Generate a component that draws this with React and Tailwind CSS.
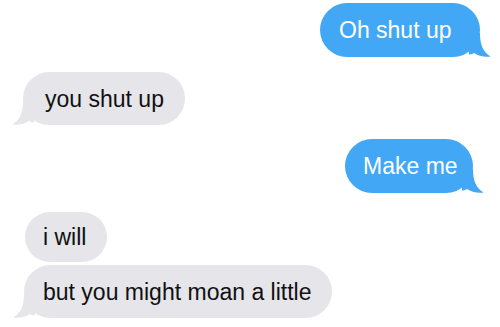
import React from 'react';

const BLUE = '#42a7f4';
const GRAY = '#e5e5ea';

// iOS style tail, drawn for the right side; mirrored for incoming bubbles
const Tail = ({ side, color }) => (
    <svg
        width="22"
        height="24"
        viewBox="0 0 22 24"
        className={side === 'right' ? 'absolute bottom-0 right-[-11px]' : 'absolute bottom-0 left-[-11px] -scale-x-100'}
    >
        <path d="M0 0 H11 C11 11 13.5 18.5 21.5 23.6 C15 24.4 9 22.8 5 20 C3 21.2 1 21.6 0 21.6 Z" fill={color} />
    </svg>
);

const Bubble = ({ side, text, className, tail = true }) => {
    const isMe = side === 'right';
    return (
        <div className={`relative flex items-center rounded-[27px] text-[23px] leading-[22px] ${isMe ? 'bg-[#42a7f4] text-white' : 'bg-[#e5e5ea] text-[#111]'} ${className}`}>
            <span className="whitespace-nowrap">{text}</span>
            {tail && <Tail side={side} color={isMe ? BLUE : GRAY} />}
        </div>
    );
};

export default function App() {
    return (
        <div className="w-[500px] h-[327px] bg-white overflow-hidden flex flex-col font-['Liberation_Sans',Arial,sans-serif]">
            {/* outgoing */}
            <div className="flex justify-end mt-[3px] mr-[20px]">
                <Bubble side="right" text="Oh shut up" className="w-[160px] h-[54px] pl-[19px]" />
            </div>

            {/* incoming */}
            <div className="flex justify-start mt-[15px] ml-[23px]">
                <Bubble side="left" text="you shut up" className="w-[162px] h-[53px] pl-[22px]" />
            </div>

            <div className="flex justify-end mt-[14px] mr-[27px]">
                <Bubble side="right" text="Make me" className="w-[128px] h-[54px] pl-[18px]" />
            </div>

            <div className="flex justify-start mt-[19px] ml-[25px]">
                <Bubble side="left" text="i will" tail={false} className="w-[82px] h-[50px] pl-[18px]" />
            </div>

            <div className="flex justify-start mt-[3px] ml-[24px]">
                <Bubble side="left" text="but you might moan a little" className="w-[308px] h-[53px] pl-[19px]" />
            </div>
        </div>
    );
}
